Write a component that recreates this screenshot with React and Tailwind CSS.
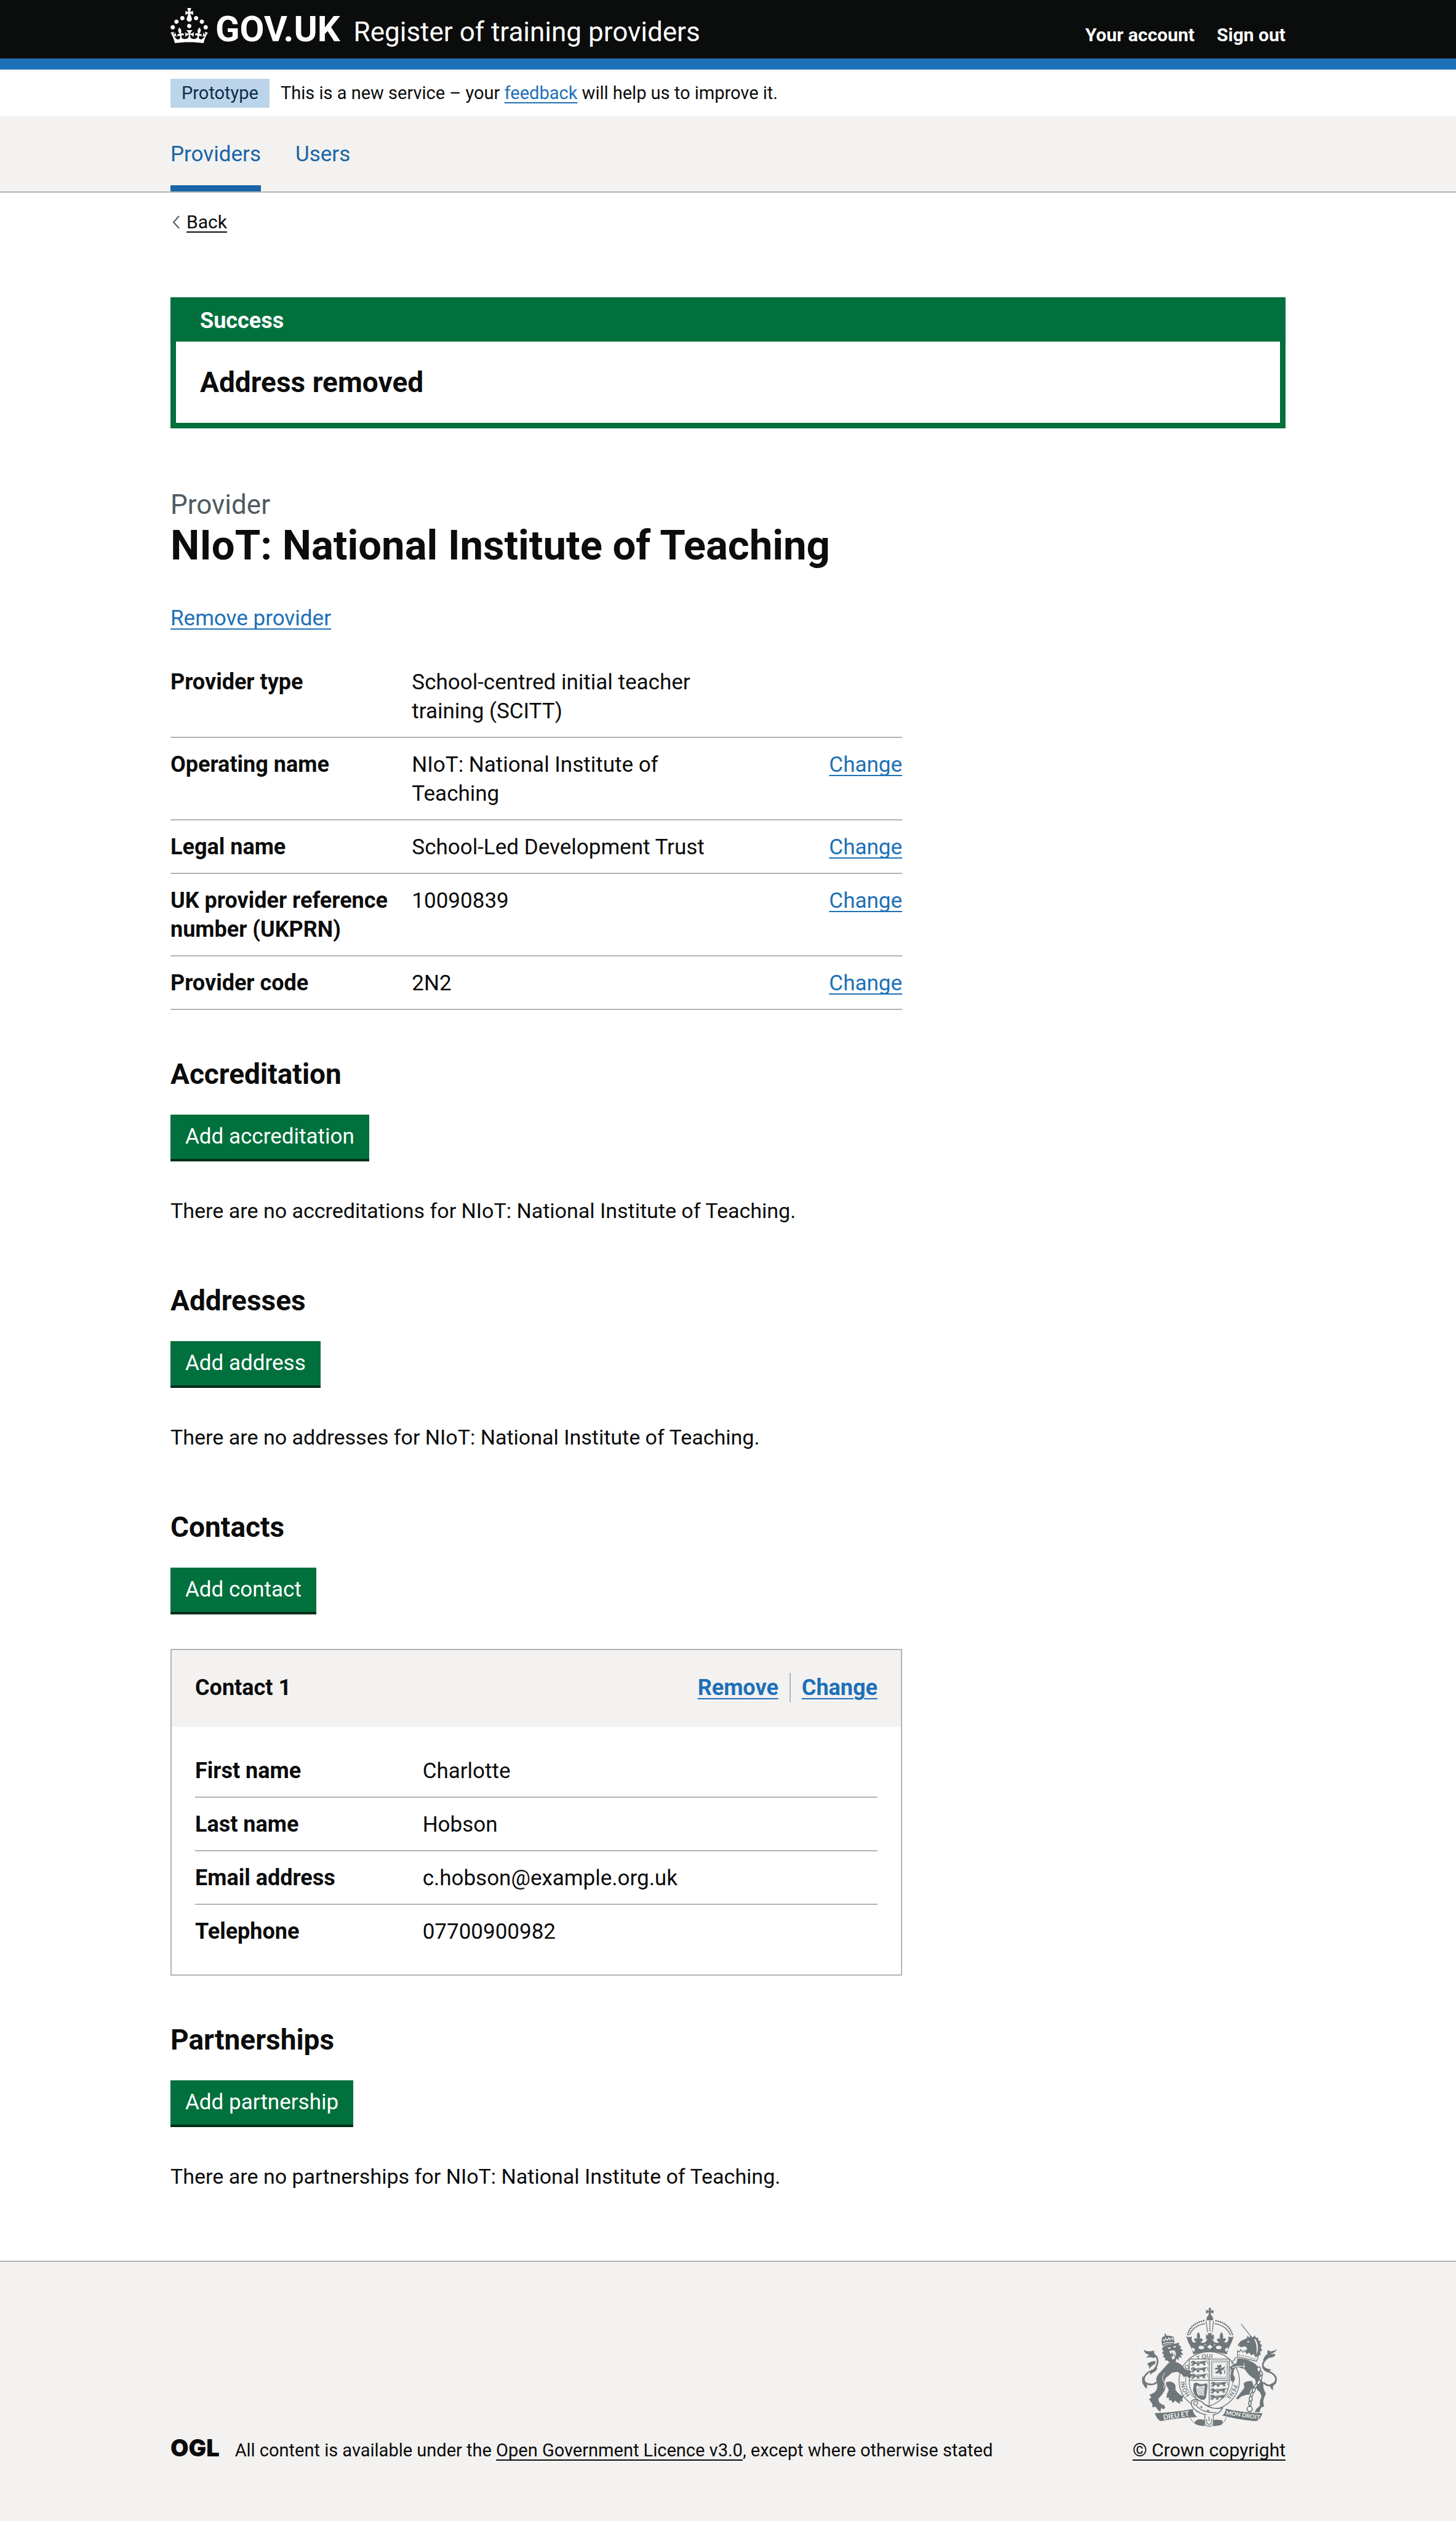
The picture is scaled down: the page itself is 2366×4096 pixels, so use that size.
const LINK =
  "text-[#1d70b8] underline decoration-2 underline-offset-[5px] [text-decoration-skip-ink:none]";
const WRAP = "mx-auto w-full max-w-[1812px]";
const ORG = "NIoT: National Institute of Teaching";

const summary = [
  ["Provider type", "School-centred initial teacher training (SCITT)", false],
  ["Operating name", ORG, true],
  ["Legal name", "School-Led Development Trust", true],
  ["UK provider reference number (UKPRN)", "10090839", true],
  ["Provider code", "2N2", true],
];

const contact = [
  ["First name", "Charlotte"],
  ["Last name", "Hobson"],
  ["Email address", "c.hobson@example.org.uk"],
  ["Telephone", "07700900982"],
];

function Crown() {
  return (
    <svg viewBox="0 0 32 30" className="-mt-0.5 h-[57px] w-[61px] shrink-0 self-start" fill="currentColor" aria-hidden="true">
      <path d="M22.6 10.4c-1 .4-2-.1-2.4-1-.4-.9.1-2 1-2.4.9-.4 2 .1 2.4 1s-.1 2-1 2.4m-5.9 6.7c-.9.4-2-.1-2.4-1-.4-.9.1-2 1-2.4.9-.4 2 .1 2.4 1s-.1 2-1 2.4m10.8-3.7c-1 .4-2-.1-2.4-1-.4-.9.1-2 1-2.4.9-.4 2 .1 2.4 1s0 2-1 2.4m3.3 4.8c-1 .4-2-.1-2.4-1-.4-.9.1-2 1-2.4.9-.4 2 .1 2.4 1s-.1 2-1 2.4M17 4.7l2.3 1.2V2.5l-2.3.7-.2-.2.9-3h-3.4l.9 3-.2.2c-.1.1-2.3-.7-2.3-.7v3.4L15 4.7c.1.1.1.2.2.2l-1.3 4c-.1.2-.1.4-.1.6 0 1.1.8 2 1.9 2.2h.7c1-.2 1.9-1.1 1.9-2.1 0-.2 0-.4-.1-.6l-1.3-4c-.1-.2 0-.2.1-.3m-7.6 5.7c.9.4 2-.1 2.4-1 .4-.9-.1-2-1-2.4-.9-.4-2 .1-2.4 1s0 2 1 2.4m-5 3c.9.4 2-.1 2.4-1 .4-.9-.1-2-1-2.4-.9-.4-2 .1-2.4 1s.1 2 1 2.4m-3.2 4.8c.9.4 2-.1 2.4-1 .4-.9-.1-2-1-2.4-.9-.4-2 .1-2.4 1s0 2 1 2.4m14.8 11c4.4 0 8.6.3 12.3.8 1.1-4.5 2.4-7 3.7-8.8l-2.5-.9c.2 1.3.3 1.9 0 2.7-.4-.4-.8-1.1-1.1-2.3l-1.2 4c.7-.5 1.3-.8 2-.9-1.1 2.5-2.6 3.1-3.5 3-1.1-.2-1.7-1.2-1.5-2.1.3-1.2 1.5-1.5 2.1-.1 1.1-2.3-.8-3-2-2.3 1.9-1.9 2.1-3.5.6-5.6-2.1 1.6-2.1 3.2-1.2 5.5-1.2-1.4-3.2-.6-2.5 1.6.9-1.4 2.1-.5 1.9.8-.2 1.1-1.7 2.1-3.5 1.9-2.7-.2-2.9-2.1-2.9-3.6.7-.1 1.9.5 2.9 1.9l.4-4.3c-1.1 1.1-2.1 1.4-3.2 1.4.4-1.2 2.1-3 2.1-3h-5.4s1.7 1.9 2.1 3c-1.1 0-2.1-.2-3.2-1.4l.4 4.3c1-1.4 2.2-2 2.9-1.9-.1 1.5-.2 3.4-2.9 3.6-1.9.2-3.4-.8-3.5-1.9-.2-1.3 1-2.2 1.9-.8.7-2.3-1.2-3-2.5-1.6.9-2.2.9-3.9-1.2-5.5-1.5 2-1.3 3.7.6 5.6-1.2-.7-3.1 0-2 2.3.6-1.4 1.8-1.1 2.1.1.2.9-.3 1.9-1.5 2.1-.9.2-2.4-.5-3.5-3 .6 0 1.2.3 2 .9l-1.2-4c-.3 1.1-.7 1.9-1.1 2.3-.3-.8-.2-1.4 0-2.7l-2.9.9C1.3 23 2.6 25.5 3.7 30c3.7-.5 7.9-.8 12.3-.8" />
    </svg>
  );
}

/* One heraldic lion passant, used in rows on the shield */
function Passant({ x, y }) {
  return (
    <g transform={`translate(${x} ${y})`}>
      <path d="M4 4 Q10 -2 20 1 L24 6 Q36 2 52 4 L66 1 Q78 -1 76 8 L70 10 L74 20 L62 22 L64 14 L52 13 L42 15 L44 23 L34 24 L33 16 L22 15 L16 22 L6 21 L14 13 L4 12 Z" />
      <path d="M72 3 Q84 -6 86 6 Q82 14 90 18" fill="none" strokeWidth="3" />
      <path d="M0 18 Q8 26 16 24" fill="none" strokeWidth="3" />
      <path d="M26 9 L48 9 M8 7 L14 7" fill="none" stroke="#f3f2f1" strokeWidth="2" />
    </g>
  );
}

function Crest() {
  const bg = "#f3f2f1";
  return (
    <svg viewBox="130 70 668 590" className="h-[194px] w-[220px]" fill="#6f777b" stroke="none" role="img" aria-label="Royal coat of arms">
      <defs>
        <path id="garter" d="M379 512 A122 112 0 1 1 549 512" />
        <clipPath id="shield">
          <path d="M365 325 H563 V440 Q560 520 464 558 Q368 520 365 440 Z" />
        </clipPath>
      </defs>

      {/* garter */}
      <g fill={bg} stroke="#6f777b">
        <ellipse cx="464" cy="432" rx="149" ry="143" strokeWidth="4" />
        <ellipse cx="464" cy="432" rx="117" ry="107" strokeWidth="3" />
      </g>
      <g fontFamily="Lato, sans-serif" fontSize="28" fontWeight="700">
        <text><textPath href="#garter" startOffset="14">HONI</textPath></text>
        <text><textPath href="#garter" startOffset="130">SO</textPath></text>
        <text><textPath href="#garter" startOffset="216">T QUI</textPath></text>
        <text><textPath href="#garter" startOffset="350">M</textPath></text>
        <text><textPath href="#garter" startOffset="478">PENSE</textPath></text>
      </g>

      {/* shield */}
      <path d="M365 325 H563 V440 Q560 520 464 558 Q368 520 365 440 Z" fill={bg} stroke="#6f777b" strokeWidth="4" />
      <path d="M464 325 V556 M365 430 H563" fill="none" stroke="#6f777b" strokeWidth="4" />
      <g stroke="#6f777b" clipPath="url(#shield)">
        <Passant x={371} y={334} />
        <Passant x={371} y={366} />
        <Passant x={371} y={398} />
        <Passant x={470} y={438} />
        <Passant x={468} y={470} />
        <Passant x={466} y={502} />
      </g>
      <rect x="475" y="335" width="80" height="86" fill="none" stroke="#6f777b" strokeWidth="3" />
      <rect x="482" y="342" width="66" height="72" fill="none" stroke="#6f777b" strokeWidth="2" strokeDasharray="9 3" />
      <path d="M505 352 L512 358 L520 350 L526 362 L518 372 L530 368 L542 360 L538 374 L524 382 L528 396 L518 404 L514 392 L500 398 L492 390 L506 384 L508 376 L492 378 L494 368 L508 368 L502 360 Z" />
      <path d="M534 378 Q546 384 538 398" fill="none" stroke="#6f777b" strokeWidth="4" />
      {/* harp */}
      <path d="M388 446 Q400 438 412 446 Q430 454 452 444 L456 456 L448 516 Q438 532 420 524 L398 508 L390 498 L384 480 Z" />
      <path d="M402 456 Q420 462 442 456 L438 508 Q424 500 410 506 Q396 480 402 456 Z" fill={bg} />
      <path d="M404 470 L438 500 M403 480 L430 503 M408 460 L440 488 M420 461 L441 476 M440 462 L408 494 M441 476 L412 502 M426 461 L403 482 M439 490 L426 502" stroke="#6f777b" strokeWidth="2" />

      {/* crown */}
      <path d="M461 73 Q467 70 474 73 L471 87 L485 82 V100 L471 95 L474 110 H460 L463 95 L448 100 V82 L463 87 Z" />
      <path d="M450 134 Q450 108 467 108 Q484 108 484 134 Z" />
      <g fill="none" stroke="#6f777b" strokeLinecap="round">
        <path d="M358 204 Q370 150 438 136 M498 136 Q564 150 578 204" strokeWidth="9" strokeDasharray="0 11" />
        <path d="M367 206 Q384 160 444 150 M490 150 Q550 160 568 206" strokeWidth="5" strokeLinecap="butt" />
        <path d="M449 138 L455 190 M485 138 L479 190" strokeWidth="4" />
        <path d="M467 140 V190" strokeWidth="8" strokeDasharray="0 11" />
      </g>
      <path d="M350 212 Q364 222 378 212 Q374 230 382 240 Q390 246 400 240 Q388 236 390 226 Q396 218 406 226 Q398 206 410 192 Q424 206 416 226 Q426 218 432 228 Q432 238 420 240 Q434 250 446 240 L458 224 L448 230 V204 L460 208 L456 197 H478 L474 208 L487 204 V230 L476 224 L488 240 Q502 250 514 240 Q502 238 502 228 Q508 218 518 226 Q512 206 524 192 Q538 206 530 226 Q540 218 546 226 Q546 236 536 240 Q546 246 554 240 Q562 230 558 212 Q570 222 585 212 Q578 240 562 268 L550 302 Q467 276 386 302 L374 268 Q358 240 350 212 Z" />
      <g fill={bg}>
        <ellipse cx="425" cy="268" rx="14" ry="9" />
        <ellipse cx="511" cy="268" rx="14" ry="9" />
        <path d="M467 254 L481 265 L467 276 L453 265 Z M384 268 L394 279 L387 290 L376 276 Z M551 268 L559 277 L548 290 L541 279 Z" />
        <path d="M444 250 L449 258 L440 256 Z M490 250 L495 256 L486 258 Z" />
      </g>

      {/* lion */}
      <path d="M262 345 C285 335 305 338 325 352 L345 375 L376 386 L370 396 L382 406 L366 420 L352 410 L338 414 L328 400 L306 388 L280 392 L262 408 C242 420 240 436 248 455 C250 480 232 500 214 520 C210 540 225 548 240 552 L247 566 L236 574 L228 564 L222 586 L208 574 L198 560 L184 564 L182 545 L166 524 L178 514 L168 502 L190 492 C208 480 210 460 205 440 C198 420 206 405 222 390 Z" />
      <path d="M250 440 C270 432 290 438 297 455 L298 480 L318 500 L338 510 L330 524 L334 536 L318 532 L322 546 L306 540 L296 530 L284 542 L276 528 L264 530 L266 516 L252 516 L256 495 L264 480 C260 465 248 455 250 440 Z" />
      <path d="M238 262 L258 254 L290 250 L316 244 L314 258 L326 262 L320 272 L334 282 L324 288 L336 304 L322 304 L328 320 L314 314 L312 332 L302 322 L298 340 L284 346 L270 344 L254 330 L246 334 L246 318 L236 316 L240 302 L230 296 L238 286 L230 276 Z" />
      <path d="M256 270 L274 266 L270 276 Z M284 262 L302 260 L294 270 Z M266 286 L282 282 L294 284 L300 300 L292 324 L282 328 L276 312 L284 314 L286 300 L272 298 Z" fill={bg} />
      <path d="M280 290 V314 M290 296 L292 312" stroke="#6f777b" strokeWidth="4" />
      <path d="M247 198 L252 206 L248 214 L242 206 Z M228 240 L230 220 Q248 202 286 214 L292 238 L290 252 Q258 246 234 262 Z" />
      <path d="M234 228 L242 236 L248 222 L256 233 L264 220 L270 231 L280 220 L286 232 M236 250 Q260 240 288 244" fill="none" stroke={bg} strokeWidth="4" />
      <path d="M204 440 C188 456 160 452 146 440 C130 414 158 388 188 380 C208 362 214 336 204 316 C196 300 178 300 166 312" fill="none" stroke="#6f777b" strokeWidth="8" />
      <path d="M140 276 Q148 290 178 286 Q188 284 192 282 Q188 296 204 312 L190 320 Q170 312 152 320 Q162 306 168 304 Q142 300 140 276 Z M156 350 Q178 332 200 336 L196 350 Q178 358 166 376 Q170 356 156 350 Z M134 404 Q142 420 140 436 L154 448 Q160 458 154 472 Q132 452 132 430 Z M172 392 Q184 372 210 368 L196 388 Q184 390 172 404 Z" />
      <path d="M246 394 Q226 412 238 436 Q250 446 238 470" fill="none" stroke={bg} strokeWidth="3" />

      {/* unicorn */}
      <path d="M622 152 L664 206" stroke="#6f777b" strokeWidth="5" strokeDasharray="6 2" />
      <path d="M608 250 L620 236 L650 222 L652 210 L664 220 L664 204 L678 218 L690 208 L694 220 L706 220 L706 232 L718 238 L714 248 L726 258 L718 266 L726 282 L716 288 L718 306 L706 304 L700 320 L680 312 L640 292 L652 272 L642 262 L622 266 L612 264 L616 256 L604 262 Z" />
      <path d="M650 236 L664 238 L656 244 Z M686 226 Q704 258 696 306 L702 290 Q710 258 694 228 Z" fill={bg} />
      <path d="M604 284 L614 290 L620 278 L630 292 L640 282 L650 298 L662 290 L672 304 L684 298 L694 314 L708 306 L698 336 Q650 324 604 314 Z" fill={bg} stroke="#6f777b" strokeWidth="4" />
      <path d="M610 304 Q650 312 694 326" fill="none" stroke="#6f777b" strokeWidth="4" strokeDasharray="7 4" />
      <path d="M604 322 Q650 322 684 344 Q710 360 714 392 L712 410 Q724 428 732 446 Q728 470 744 496 L734 520 Q728 540 736 558 L720 566 L712 588 L688 586 L698 570 L714 556 Q712 530 722 510 Q718 488 702 478 Q688 462 694 440 L690 424 Q660 410 640 376 L610 366 Q588 366 586 382 L582 400 L592 420 L584 440 L570 432 L568 408 L574 382 L564 366 Q584 350 598 346 Z" />
      <path d="M676 434 Q646 432 634 446 L638 466 L620 490 L596 520 L606 524 L622 510 Q648 500 664 500 Q662 480 684 462 Z" />
      <path d="M640 362 Q606 356 576 368" fill="none" stroke={bg} strokeWidth="4" />
      <path d="M632 344 Q644 362 632 372" fill="none" stroke={bg} strokeWidth="3" />
      <path d="M578 350 Q570 338 590 330 Q586 318 604 318" fill="none" stroke="#6f777b" strokeWidth="4" />
      <path d="M732 440 C752 466 792 458 794 430 C796 402 768 390 748 384 C726 374 724 352 736 334 C744 318 758 314 768 314" fill="none" stroke="#6f777b" strokeWidth="8" />
      <path d="M798 276 Q790 298 764 298 L792 302 Q786 318 762 318 Q742 330 736 344 L730 330 Q738 306 752 300 Q748 290 754 280 Q764 290 774 286 Q790 284 798 276 Z M728 356 Q746 376 770 376 Q764 388 748 390 Q734 380 728 356 Z M796 404 Q798 430 786 446 Q776 458 780 480 Q762 468 764 450 L784 440 Q794 424 796 404 Z" />
      <g fill={bg} stroke="#6f777b" strokeWidth="5">
        <ellipse cx="709" cy="376" rx="9" ry="12" />
        <ellipse cx="720" cy="396" rx="6" ry="12" transform="rotate(-20 720 396)" />
        <ellipse cx="718" cy="418" rx="6" ry="12" transform="rotate(15 718 418)" />
        <ellipse cx="709" cy="440" rx="7" ry="12" transform="rotate(30 709 440)" />
        <ellipse cx="694" cy="458" rx="6" ry="12" transform="rotate(40 694 458)" />
        <ellipse cx="684" cy="478" rx="7" ry="12" transform="rotate(20 684 478)" />
        <ellipse cx="674" cy="500" rx="6" ry="12" transform="rotate(20 674 500)" />
        <ellipse cx="669" cy="522" rx="7" ry="12" />
        <ellipse cx="665" cy="544" rx="6" ry="12" />
        <circle cx="664" cy="572" r="13" />
      </g>

      {/* strap and buckle */}
      <path d="M376 536 Q378 526 398 526 L424 534 Q470 580 530 566 Q516 598 472 604 Q412 600 384 566 Q372 552 376 536 Z" fill={bg} stroke="#6f777b" strokeWidth="5" />
      <path d="M386 540 Q398 528 408 540 Q404 556 390 552 Z M400 556 Q440 596 500 588" fill="none" stroke="#6f777b" strokeWidth="4" />
      <g>
        <circle cx="425" cy="562" r="5" />
        <circle cx="458" cy="580" r="5" />
      </g>
      <path d="M442 600 V640 Q442 657 462 657 Q484 657 484 640 V600" fill={bg} stroke="#6f777b" strokeWidth="4" />
      <path d="M452 622 Q446 646 463 648 Q480 646 474 622 M463 610 V632" fill="none" stroke="#6f777b" strokeWidth="4" />

      {/* motto ribbon */}
      <path d="M195 592 Q290 590 384 572 Q380 590 404 612 Q320 612 224 632 Q204 622 195 592 Z" />
      <path d="M546 570 Q630 590 727 592 Q718 622 696 632 Q610 626 528 604 Q544 592 546 570 Z" />
      <path d="M368 614 Q384 652 440 654 L438 628 Q404 616 392 640" fill="none" stroke="#6f777b" strokeWidth="3" />
      <path d="M392 642 Q396 622 420 624 L440 626 V655 Q404 656 392 642 Z M484 626 Q510 624 528 628 Q534 642 522 652 L484 655 Z" />
      <path d="M548 612 Q540 652 486 656" fill="none" stroke="#6f777b" strokeWidth="3" />
      <g fill={bg} fontFamily="Lato, sans-serif" fontWeight="700">
        <text transform="translate(238 624) rotate(-8)" fontSize="34">DIEU ET</text>
        <text transform="translate(545 600) rotate(8)" fontSize="29">MON DROIT</text>
      </g>
    </svg>
  );
}

function AddButton({ children }) {
  return (
    <button type="button" className="mt-[38px] block bg-[#00703c] px-6 py-3 text-[35px] leading-[48px] text-white shadow-[0_4px_0_#002d18]">
      {children}
    </button>
  );
}

function Heading({ children }) {
  return <h2 className="text-[46px] leading-[56px] font-bold">{children}</h2>;
}

function EmptySection({ title, action, noun }) {
  return (
    <section className="flow-root">
      <Heading>{title}</Heading>
      <AddButton>{action}</AddButton>
      <p className="mt-[61px] text-[34px]">There are no {noun} for {ORG}.</p>
    </section>
  );
}

export default function App() {
  return (
    <div className="flex min-h-screen flex-col bg-white font-[Roboto,Arial,sans-serif] text-[35px] leading-[47px] text-[#0b0c0c]">
      <header className="border-b-[18px] border-[#1d70b8] bg-[#0b0c0c] text-white">
        <div className={`${WRAP} flex items-baseline justify-between pt-[15px] pb-4`}>
          <a href="#" className="flex items-baseline">
            <Crown />
            <span className="ml-3 text-[58px] leading-[64px] font-bold">GOV.UK</span>
            <span className="ml-[22px] text-[44px] leading-[48px]">Register of training providers</span>
          </a>
          <nav className="flex gap-9 text-[30px] leading-[38px] font-bold">
            <a href="#">Your account</a>
            <a href="#">Sign out</a>
          </nav>
        </div>
      </header>

      <div className={`${WRAP} flex items-center gap-[18px] pt-[15px] pb-3.5 text-[29px]`}>
        <strong className="bg-[#bbd4ea] px-[18px] font-normal text-[#0c2d4a]">Prototype</strong>
        <span>
          This is a new service – your <a href="#" className={LINK}>feedback</a> will help us to improve it.
        </span>
      </div>

      <nav className="border-b-2 border-[#b1b4b6] bg-[#f3f2f1] text-[#1a65a6]">
        <div className={`${WRAP} flex gap-[56px]`}>
          <a href="#" aria-current="page" className="border-b-10 border-[#1a65a6] pt-[38px] pb-[27px]">Providers</a>
          <a href="#" className="pt-[38px] pb-[37px]">Users</a>
        </div>
      </nav>

      <main className={`${WRAP} flow-root`}>
        <a href="#" className="mt-[29px] flex w-fit items-center text-[30px] leading-[38px]">
          <svg viewBox="0 0 14 22" className="ml-0.5 h-[22px] w-3.5" fill="none" stroke="#505a5f" strokeWidth="2" aria-hidden="true">
            <path d="M12 1 L3 11 L12 21" />
          </svg>
          <span className="ml-2.5 underline decoration-2 underline-offset-[5px]">Back</span>
        </a>

        <section className="mt-[103px] border-[9px] border-[#00703c]" role="alert">
          <h2 className="bg-[#00703c] px-[39px] pt-1.5 pb-2.5 text-[36px] leading-[47px] font-bold text-white">Success</h2>
          <p className="px-[39px] py-[38px] text-[46px] leading-[56px] font-bold">Address removed</p>
        </section>

        <p className="mt-24 text-[44px] leading-[56px] text-[#505a5f]">Provider</p>
        <h1 className="text-[67px] leading-[76px] font-bold">{ORG}</h1>
        <p className="mt-[57px]">
          <a href="#" className={LINK}>Remove provider</a>
        </p>

        <div className="w-[1189px] max-w-full">
          <dl className="mt-[37px]">
            {summary.map(([key, value, editable]) => (
              <div key={key} className="flex border-b-2 border-[#b1b4b6] pt-5 pb-[18px]">
                <dt className="w-[33%] shrink-0 pr-8 text-[36px] font-bold">{key}</dt>
                <dd className="w-[500px]">{value}</dd>
                {editable && (
                  <dd className="ml-auto">
                    <a href="#" className={LINK} aria-label={`Change ${key}`}>Change</a>
                  </dd>
                )}
              </div>
            ))}
          </dl>

          <div className="mt-[76px] flex flex-col gap-[94px]">
            <EmptySection title="Accreditation" action="Add accreditation" noun="accreditations" />
            <EmptySection title="Addresses" action="Add address" noun="addresses" />

            <div>
              <Heading>Contacts</Heading>
              <AddButton>Add contact</AddButton>
              <article className="mt-[60px] mb-[76px] border-2 border-[#b1b4b6]">
                <div className="flex justify-between bg-[#f3f2f1] px-[38px] pt-[37px] pb-10 text-[36px] leading-[48px] font-bold">
                  <h3>Contact 1</h3>
                  <div className="flex text-[#1d70b8]">
                    <a href="#" className="mr-[18px] underline decoration-2 underline-offset-[5px]">Remove</a>
                    <a href="#" className="border-l-2 border-[#b1b4b6] pl-[18px] underline decoration-2 underline-offset-[5px]">Change</a>
                  </div>
                </div>
                <dl className="px-[38px] pt-7 pb-7">
                  {contact.map(([key, value]) => (
                    <div key={key} className="flex border-b-2 border-[#b1b4b6] pt-5 pb-[18px] last:border-b-0">
                      <dt className="w-1/3 shrink-0 text-[36px] font-bold">{key}</dt>
                      <dd>{value}</dd>
                    </div>
                  ))}
                </dl>
              </article>
              <EmptySection title="Partnerships" action="Add partnership" noun="partnerships" />
            </div>
          </div>
        </div>
      </main>

      <footer className="mt-[113px] grow border-t-2 border-[#b1b4b6] bg-[#f3f2f1]">
        <div className={`${WRAP} flex items-end justify-between pt-[74px] pb-[95px] text-[29px] leading-[38px]`}>
          <div className="flex items-baseline gap-[25px]">
            <span className="font-[Inter,sans-serif] text-[38px] font-black">OGL</span>
            <p>
              All content is available under the{" "}
              <a href="#" className="underline decoration-2 underline-offset-[5px] [text-decoration-skip-ink:none]">Open Government Licence v3.0</a>
              , except where otherwise stated
            </p>
          </div>
          <a href="#" className="flex flex-col items-center gap-[19px] text-[30px]">
            <Crest />
            <span className="underline decoration-2 underline-offset-[5px] [text-decoration-skip-ink:none]">© Crown copyright</span>
          </a>
        </div>
      </footer>
    </div>
  );
}
